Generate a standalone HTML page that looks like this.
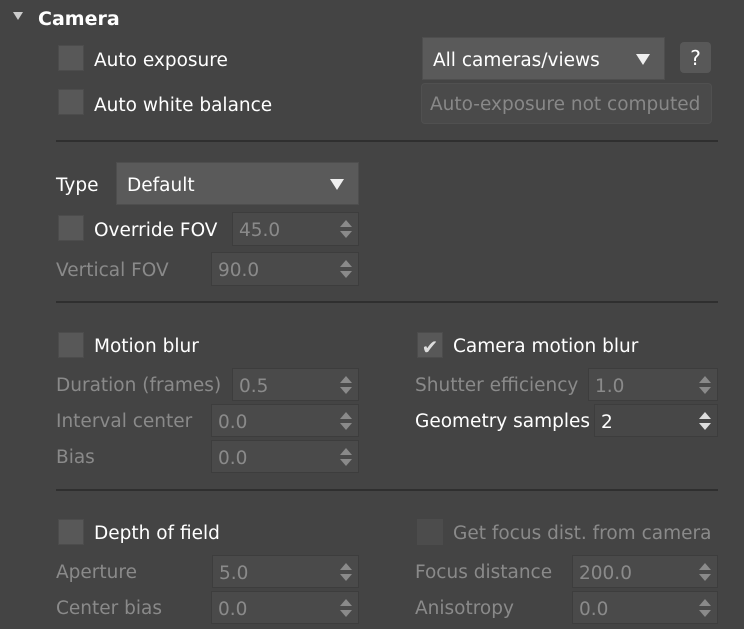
<!DOCTYPE html><html><head><style>
body{margin:0;width:744px;height:629px;background:#444;overflow:hidden;font-family:Tahoma,"DejaVu Sans","Liberation Sans",sans-serif;font-size:18.5px;color:#fff;position:relative}
.a{position:absolute}
.t{position:absolute;line-height:20px;white-space:nowrap;transform:translateY(-40%)}
.d{color:#8a8a8a}
.cb{position:absolute;width:26px;height:26px;background:#585858;border:1px solid #4c4c4c;box-sizing:border-box}
.sp{position:absolute;background:#4a4a4a;border:1px solid #3d3d3d;box-sizing:border-box;color:#8a8a8a;padding-left:6px;padding-top:3px;display:flex;align-items:center}
.sp.en{background:#474747;color:#fff}
.sp:after{content:"";position:absolute;right:6px;top:50%;margin-top:-9px;width:0;height:0;border-left:6px solid transparent;border-right:6px solid transparent;border-bottom:7px solid #8a8a8a}
.sp:before{content:"";position:absolute;right:6px;top:50%;margin-top:2px;width:0;height:0;border-left:6px solid transparent;border-right:6px solid transparent;border-top:7px solid #8a8a8a}
.sp.en:after{border-bottom-color:#ddd}.sp.en:before{border-top-color:#ddd}
.dd{position:absolute;background:#5a5a5a;border:1px solid #4e4e4e;box-sizing:border-box;padding-left:10px;padding-top:3px;display:flex;align-items:center}
.dd:after{content:"";position:absolute;right:14px;top:50%;margin-top:-5px;border-left:7px solid transparent;border-right:7px solid transparent;border-top:11px solid #eee}
.sep{position:absolute;left:56px;width:662px;height:2px;background:#2f2f2f}
</style></head><body>
<div class="a" style="left:13px;top:12px;border-left:5px solid transparent;border-right:5px solid transparent;border-top:8px solid #ccc"></div>
<div class="t" style="left:38px;top:17px;font-weight:bold;font-size:19px">Camera</div>
<div class="cb" style="left:58px;top:45px"></div><div class="t" style="left:94px;top:59px">Auto exposure</div>
<div class="cb" style="left:58px;top:89px"></div><div class="t" style="left:94px;top:104px">Auto white balance</div>
<div class="dd" style="left:422px;top:37px;width:243px;height:43px">All cameras/views</div>
<div class="a" style="left:680px;top:42px;width:31px;height:31px;background:#585858;border-radius:4px;text-align:center;line-height:33px;font-size:20px">?</div>
<div class="a" style="left:421px;top:83px;width:291px;height:41px;background:#4a4a4a;border:1px solid #505050;box-sizing:border-box;border-radius:4px;color:#888;line-height:42px;padding-left:8px">Auto-exposure not computed</div>
<div class="sep" style="top:140px"></div>
<div class="t" style="left:56px;top:184px">Type</div>
<div class="dd" style="left:116px;top:162px;width:243px;height:43px">Default</div>
<div class="cb" style="left:58px;top:215px"></div><div class="t" style="left:94px;top:229px">Override FOV</div>
<div class="sp" style="left:232px;top:212px;width:127px;height:34px">45.0</div>
<div class="t d" style="left:56px;top:269px">Vertical FOV</div>
<div class="sp" style="left:211px;top:252px;width:148px;height:34px">90.0</div>
<div class="sep" style="top:301px"></div>
<div class="cb" style="left:58px;top:332px"></div><div class="t" style="left:94px;top:345px">Motion blur</div>
<div class="cb" style="left:417px;top:332px;color:#ddd;font-size:20px;line-height:28px;text-align:center">✔</div><div class="t" style="left:453px;top:345px">Camera motion blur</div>
<div class="t d" style="left:56px;top:384px">Duration (frames)</div>
<div class="sp" style="left:232px;top:368px;width:127px;height:33px">0.5</div>
<div class="t d" style="left:415px;top:384px">Shutter efficiency</div>
<div class="sp" style="left:588px;top:368px;width:130px;height:33px">1.0</div>
<div class="t d" style="left:56px;top:420px">Interval center</div>
<div class="sp" style="left:211px;top:404px;width:148px;height:33px">0.0</div>
<div class="t" style="left:415px;top:420px">Geometry samples</div>
<div class="sp en" style="left:594px;top:404px;width:124px;height:33px">2</div>
<div class="t d" style="left:56px;top:456px">Bias</div>
<div class="sp" style="left:211px;top:440px;width:148px;height:33px">0.0</div>
<div class="sep" style="top:489px"></div>
<div class="cb" style="left:58px;top:519px"></div><div class="t" style="left:94px;top:532px">Depth of field</div>
<div class="cb" style="left:417px;top:519px;background:#4c4c4c"></div><div class="t d" style="left:453px;top:532px">Get focus dist. from camera</div>
<div class="t d" style="left:56px;top:571px">Aperture</div>
<div class="sp" style="left:212px;top:555px;width:147px;height:33px">5.0</div>
<div class="t d" style="left:415px;top:571px">Focus distance</div>
<div class="sp" style="left:572px;top:555px;width:146px;height:33px">200.0</div>
<div class="t d" style="left:56px;top:607px">Center bias</div>
<div class="sp" style="left:211px;top:591px;width:148px;height:33px">0.0</div>
<div class="t d" style="left:415px;top:607px">Anisotropy</div>
<div class="sp" style="left:572px;top:591px;width:146px;height:33px">0.0</div>
</body></html>
